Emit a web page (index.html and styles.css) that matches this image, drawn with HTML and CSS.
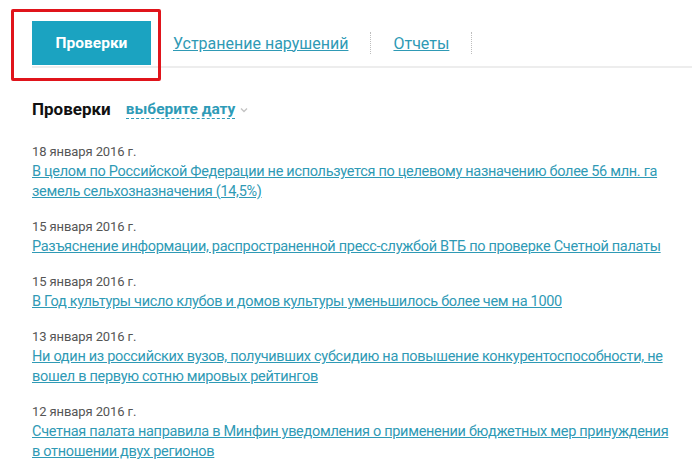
FILE: index.html
```html
<!DOCTYPE html>
<html lang="ru">
<head>
<meta charset="utf-8">
<link rel="stylesheet" href="styles.css">
</head>
<body>
<div class="page">
  <nav class="tabs">
    <a class="tab tab-active">Проверки</a>
    <a class="tab tab-link" href="#">Устранение нарушений</a>
    <span class="sep"></span>
    <a class="tab tab-link" href="#">Отчеты</a>
    <span class="sep"></span>
  </nav>
  <div class="highlight"></div>
  <div class="filter">
    <span class="filter-title">Проверки</span>
    <span class="filter-date">выберите дату</span>
    <svg class="chev" width="8" height="6" viewBox="0 0 8 6"><path d="M1 1.5 L4 4.5 L7 1.5" fill="none" stroke="#c4c4c4" stroke-width="1.4"/></svg>
  </div>
  <ul class="news">
    <li class="item">
      <div class="date">18 января 2016 г.</div>
      <a class="title" href="#">В целом по Российской Федерации не используется по целевому назначению более 56 млн. га земель сельхозназначения (14,5%)</a>
    </li>
    <li class="item">
      <div class="date">15 января 2016 г.</div>
      <a class="title" href="#">Разъяснение информации, распространенной пресс-службой ВТБ по проверке Счетной палаты</a>
    </li>
    <li class="item">
      <div class="date">15 января 2016 г.</div>
      <a class="title" href="#">В Год культуры число клубов и домов культуры уменьшилось более чем на 1000</a>
    </li>
    <li class="item">
      <div class="date">13 января 2016 г.</div>
      <a class="title" href="#">Ни один из российских вузов, получивших субсидию на повышение конкурентоспособности, не вошел в первую сотню мировых рейтингов</a>
    </li>
    <li class="item">
      <div class="date">12 января 2016 г.</div>
      <a class="title" href="#">Счетная палата направила в Минфин уведомления о применении бюджетных мер принуждения в отношении двух регионов</a>
    </li>
  </ul>
</div>
</body>
</html>
```
FILE: styles.css
```css
html, body {
  margin: 0;
  padding: 0;
  background: #fff;
}
body {
  font-family: "Roboto", "Noto Sans", sans-serif;
  color: #222;
}
.page {
  position: relative;
  padding: 21px 0 0 32px;
}
.tabs {
  display: flex;
  align-items: center;
  height: 44px;
  border-bottom: 2px solid #ededed;
  padding-bottom: 1px;
}
.tab {
  font-size: 16px;
  text-decoration: none;
}
.tab-active {
  background: #1ba3c1;
  color: #fff;
  font-weight: bold;
  font-size: 15.5px;
  width: 119px;
  height: 44px;
  display: flex;
  align-items: center;
  justify-content: center;
}
.tab-link {
  color: #2f9ab5;
  text-decoration: underline;
  padding: 0 22px;
}
.sep {
  width: 0;
  height: 22px;
  border-left: 1px dotted #bdbdbd;
}
.highlight {
  position: absolute;
  left: 11px;
  top: 9px;
  width: 144px;
  height: 66px;
  border: 3px solid #e0141b;
  border-radius: 2px;
}
.filter {
  display: flex;
  align-items: center;
  margin-top: 30px;
  height: 22px;
}
.filter-title {
  font-size: 17px;
  font-weight: bold;
  color: #111;
}
.filter-date {
  margin-left: 15px;
  font-size: 15.5px;
  font-weight: bold;
  color: #2e9bb7;
  border-bottom: 1px dashed #2e9bb7;
  line-height: 18px;
}
.chev {
  margin-left: 5px;
  margin-top: 2px;
}
.news {
  list-style: none;
  margin: 23px 0 0 0;
  padding: 0;
  width: 642px;
}
.item {
  margin-bottom: 17px;
}
.date {
  font-size: 13px;
  letter-spacing: -0.1px;
  color: #555;
  line-height: 18px;
}
.title {
  font-size: 14.5px;
  letter-spacing: -0.3px;
  line-height: 19px;
  color: #2f9ab5;
  text-decoration: underline;
}
```
